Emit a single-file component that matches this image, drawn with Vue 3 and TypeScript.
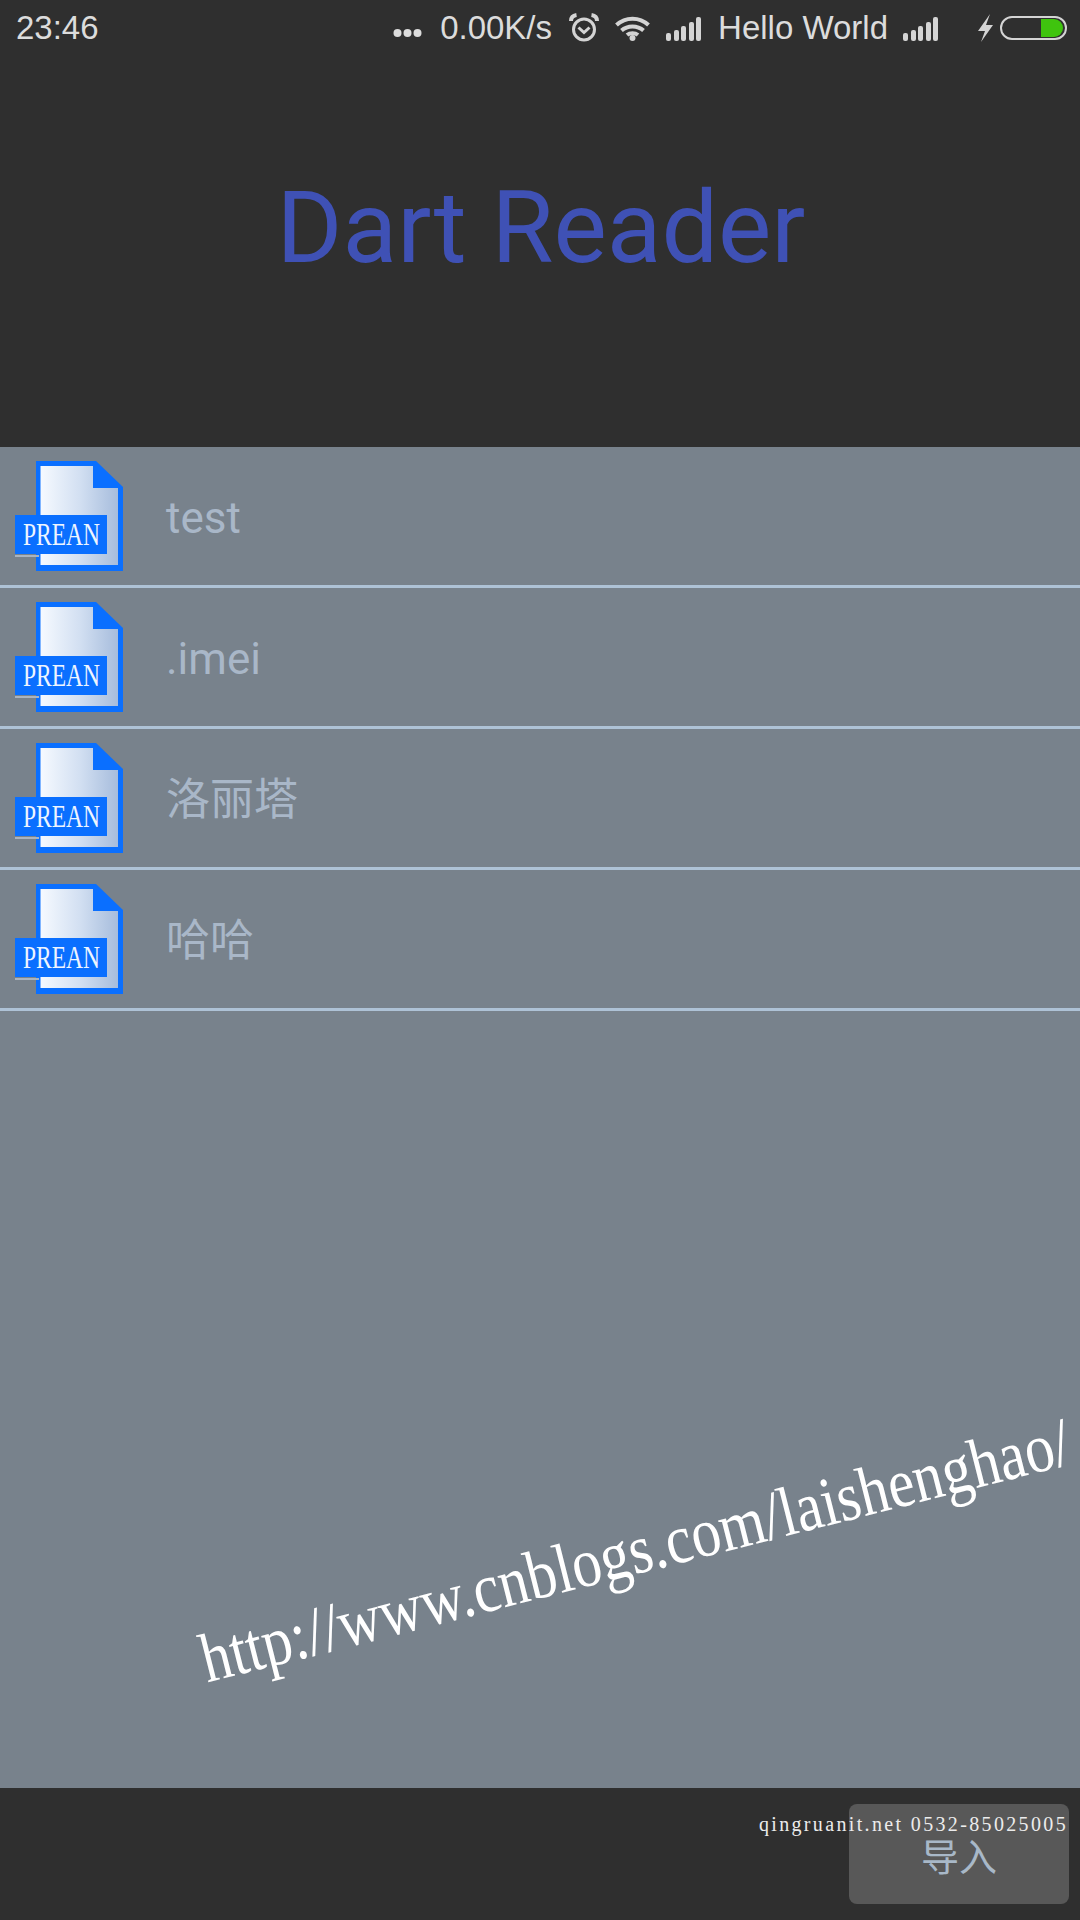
<script setup lang="ts">
interface FileItem {
  name: string;
  cjk: boolean;
}

const files: FileItem[] = [
  { name: 'test', cjk: false },
  { name: '.imei', cjk: false },
  { name: '洛丽塔', cjk: true },
  { name: '哈哈', cjk: true },
];
const bars: number[] = [8, 11, 15, 19, 24];
</script>

<template>
  <div class="screen">
    <header class="header">
      <div class="status">
        <span class="time">23:46</span>
        <div class="status-right">
          <svg class="dots" width="29" height="10" viewBox="0 0 29 10">
            <circle cx="4.500" cy="5" r="4" />
            <circle cx="14.500" cy="5" r="4" />
            <circle cx="24.500" cy="5" r="4" />
          </svg>
          <span class="speed">0.00K/s</span>
          <svg class="alarm" width="30" height="30" viewBox="0 0 30 30">
            <circle cx="15" cy="16.500" r="10.500" />
            <path d="M9.500 14.500l5.500 5 5.500-5" />
            <path d="M2 8c0-3 2-5.500 5.500-6M28 8c0-3-2-5.500-5.500-6" class="alarm-ear" />
          </svg>
          <svg class="wifi" width="35" height="25" viewBox="0 0 35 25">
            <path d="M1.500 9c9-8.500 23-8.500 32 0" />
            <path d="M6.500 14.500c6-5.500 16-5.500 22 0" />
            <path d="M12 19c3-2.500 8-2.500 11 0" />
            <circle cx="17.500" cy="22" r="3" />
          </svg>
          <div class="signal first">
            <i v-for="h in bars" :key="h" :style="{ height: h + 'px' }"></i>
          </div>
          <span class="carrier">Hello World</span>
          <div class="signal second">
            <i v-for="h in bars" :key="h" :style="{ height: h + 'px' }"></i>
          </div>
          <svg class="bolt" width="15" height="28" viewBox="0 0 15 28">
            <path d="M12 0L0 17h7L3 28l12-17H8z" />
          </svg>
          <div class="battery"><span class="battery-fill"></span></div>
        </div>
      </div>
      <h1 class="title">Dart Reader</h1>
    </header>

    <main class="list">
      <div v-for="file in files" :key="file.name" class="row">
        <svg class="file-icon" width="108" height="110" viewBox="0 0 108 110">
          <defs>
            <linearGradient id="paper" x1="0" y1="0" x2="1" y2="0">
              <stop offset="0" stop-color="#f6faff" />
              <stop offset="0.5" stop-color="#d3e0f2" />
              <stop offset="1" stop-color="#a6bcdc" />
            </linearGradient>
          </defs>
          <path d="M21 0H81L108 26V110H21z" fill="#0a6fff" />
          <path d="M25.500 5H78V27H103V104H25.500z" fill="url(#paper)" />
          <rect x="0" y="94" width="24" height="2" fill="#aab4c0" />
          <rect x="0" y="54" width="92" height="39" fill="#0a6fff" />
          <text x="8" y="84" class="prean" textLength="77" lengthAdjust="spacingAndGlyphs">PREAN</text>
        </svg>
        <span class="name" :class="{ cjk: file.cjk }">{{ file.name }}</span>
      </div>

      <div class="url">http://www.cnblogs.com/laishenghao/</div>
    </main>

    <footer class="footer">
      <button class="import">导入</button>
      <span class="stamp">qingruanit.net 0532-85025005</span>
    </footer>
  </div>
</template>

<style scoped>
.screen {
  width: 1080px;
  height: 1920px;
  display: flex;
  flex-direction: column;
  background: #78828c;
  font-family: Roboto, "Noto Sans CJK SC", sans-serif;
  overflow: hidden;
}

.header {
  height: 447px;
  flex: none;
  display: flex;
  flex-direction: column;
  background: #2f2f2f;
}

.status {
  height: 56px;
  padding: 0 13px 0 16px;
  display: flex;
  align-items: center;
  justify-content: space-between;
  color: #dcdcdc;
  font-family: "Liberation Sans", sans-serif;
  font-size: 33px;
}

.status-right {
  display: flex;
  align-items: center;
}

.dots {
  margin: 10px 18px 0 0;
  fill: #dcdcdc;
}

.alarm {
  margin-left: 17px;
  fill: none;
  stroke: #d4d4d4;
  stroke-width: 3;
}

.alarm-ear {
  stroke-width: 4;
}

.wifi {
  margin-left: 16px;
  fill: none;
  stroke: #d4d4d4;
  stroke-width: 4;
}

.wifi circle {
  fill: #d4d4d4;
  stroke: none;
}

.signal {
  display: flex;
  align-items: flex-end;
  gap: 2.500px;
  height: 24px;
  margin-top: 2px;
}

.signal i {
  width: 5px;
  border-radius: 2px;
  background: #d4d4d4;
}

.signal.first {
  margin-left: 16px;
}

.signal.second {
  margin-left: 15px;
}

.carrier {
  margin-left: 17px;
}

.bolt {
  margin-left: 40px;
  fill: #d4d4d4;
}

.battery {
  margin-left: 7px;
  width: 67px;
  height: 24px;
  box-sizing: border-box;
  padding: 1px 2px;
  display: flex;
  justify-content: flex-end;
  border: 2px solid #d4d4d4;
  border-radius: 12px;
}

.battery-fill {
  width: 22px;
  background: #3fc40e;
  border-radius: 0 9px 9px 0;
}

.title {
  margin: 0;
  padding: 112px 0 0 2px;
  text-align: center;
  font-size: 100.500px;
  font-weight: 400;
  line-height: 120px;
  color: #3f51b5;
}

.list {
  flex: 1;
  position: relative;
}

.row {
  height: 141px;
  box-sizing: border-box;
  padding-left: 15px;
  display: flex;
  align-items: center;
  gap: 43px;
  border-bottom: 3px solid #aec2d6;
}

.file-icon {
  flex: none;
  overflow: visible;
}

.prean {
  font-family: "Liberation Serif", serif;
  font-size: 31px;
  fill: #eef5ff;
}

.name {
  margin-top: 4px;
  font-size: 44px;
  color: #a9b7c8;
}

.name.cjk {
  margin-top: 0;
  margin-bottom: 4px;
}

.url {
  position: absolute;
  left: 635px;
  top: 1103px;
  transform: translate(-50%, -50%) rotate(-14.200deg) scaleY(1.18);
  font-family: "Liberation Serif", serif;
  font-size: 59px;
  line-height: 70px;
  white-space: nowrap;
  color: #ffffff;
}

.footer {
  height: 132px;
  flex: none;
  position: relative;
  padding: 16px 11px 0 0;
  box-sizing: border-box;
  display: flex;
  justify-content: flex-end;
  align-items: flex-start;
  background: #2f2f2f;
}

.import {
  width: 220px;
  height: 100px;
  padding: 0;
  border: none;
  border-radius: 8px;
  background: #585858;
  color: #a8b8c8;
  font-family: "Noto Sans CJK SC", sans-serif;
  font-size: 38px;
}

.stamp {
  position: absolute;
  right: 12px;
  top: 24px;
  font-family: "Liberation Serif", serif;
  font-size: 20px;
  letter-spacing: 2.350px;
  line-height: 24px;
  white-space: nowrap;
  color: #ececec;
}
</style>
